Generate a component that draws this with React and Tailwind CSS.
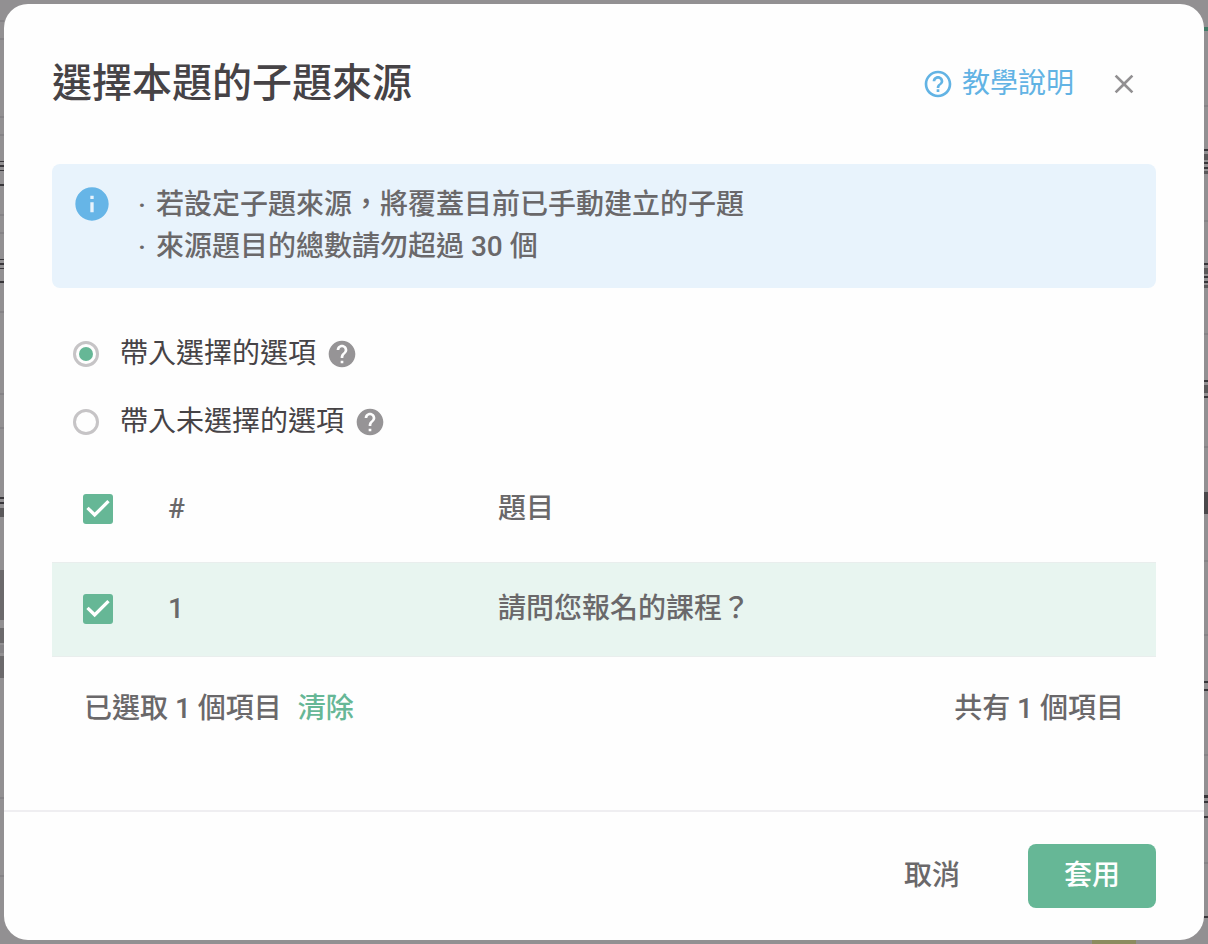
import { useState } from 'react';
import { MdClose, MdHelp, MdHelpOutline, MdInfo } from 'react-icons/md';

const NOTES = ['若設定子題來源，將覆蓋目前已手動建立的子題', '來源題目的總數請勿超過 30 個'];

const SOURCES = [
  { id: 'selected', label: '帶入選擇的選項' },
  { id: 'unselected', label: '帶入未選擇的選項' },
];

const QUESTIONS = [{ id: 1, title: '請問您報名的課程？' }];

// What is left visible of the dimmed page beside the dialog: [gap above, height, shade]
const LEFT_EDGE = [
  [20, 2, 'bg-[#858386]'],
  [16, 2, 'bg-[#858386]'],
  [76, 2, 'bg-[#858386]'],
  [16, 2, 'bg-[#858386]'],
  [25, 1, 'bg-[#38363a]'],
  [3, 2, 'bg-[#38363a]'],
  [3, 1, 'bg-[#38363a]'],
  [13, 2, 'bg-[#38363a]'],
  [28, 2, 'bg-[#858386]'],
  [16, 2, 'bg-[#858386]'],
  [25, 1, 'bg-[#38363a]'],
  [3, 2, 'bg-[#38363a]'],
  [3, 1, 'bg-[#38363a]'],
  [12, 2, 'bg-[#38363a]'],
  [28, 2, 'bg-[#858386]'],
  [80, 2, 'bg-[#858386]'],
  [32, 2, 'bg-[#858386]'],
  [68, 2, 'bg-[#38363a]'],
  [3, 2, 'bg-[#38363a]'],
  [4, 9, 'bg-[#5a585a]'],
  [53, 50, 'bg-[#6b696b]'],
  [8, 15, 'bg-[#6b696b]'],
  [2, 8, 'bg-[#858386]'],
  [3, 22, 'bg-[#6b696b]'],
  [119, 2, 'bg-[#858386]'],
  [76, 2, 'bg-[#858386]'],
];

const RIGHT_EDGE = [
  [27, 4, 'bg-[#427a66]'],
  [74, 2, 'bg-[#858386]'],
  [42, 2, 'bg-[#38363a]'],
  [3, 6, 'bg-[#5a585a]'],
  [2, 2, 'bg-[#38363a]'],
  [3, 2, 'bg-[#38363a]'],
  [2, 3, 'bg-[#5a585a]'],
  [46, 2, 'bg-[#858386]'],
  [41, 2, 'bg-[#38363a]'],
  [3, 6, 'bg-[#5a585a]'],
  [2, 2, 'bg-[#38363a]'],
  [3, 2, 'bg-[#38363a]'],
  [2, 3, 'bg-[#5a585a]'],
  [45, 2, 'bg-[#858386]'],
  [45, 2, 'bg-[#38363a]'],
  [3, 8, 'bg-[#5a585a]'],
  [3, 2, 'bg-[#38363a]'],
  [48, 2, 'bg-[#858386]'],
  [44, 22, 'bg-[#4a484b]'],
  [46, 2, 'bg-[#858386]'],
  [72, 2, 'bg-[#858386]'],
  [45, 2, 'bg-[#38363a]'],
  [6, 2, 'bg-[#38363a]'],
  [63, 2, 'bg-[#858386]'],
  [39, 3, 'bg-[#38363a]'],
  [3, 2, 'bg-[#38363a]'],
  [13, 2, 'bg-[#38363a]'],
  [44, 2, 'bg-[#858386]'],
  [52, 2, 'bg-[#38363a]'],
];

const PageEdge = ({ marks }) => (
  <div className="h-0 w-1">
    {marks.map(([gap, height, shade], i) => (
      <div key={i} className={shade} style={{ marginTop: gap, height }} />
    ))}
  </div>
);

const Checkbox = ({ label, checked, onChange }) => (
  <span className="grid size-[30px]">
    <input
      type="checkbox"
      aria-label={label}
      checked={checked}
      onChange={onChange}
      className="peer size-[30px] cursor-pointer appearance-none rounded-[3px] border-3 border-[#c2c0c2] [grid-area:1/1] checked:border-0 checked:bg-[#66b796]"
    />
    <svg
      viewBox="3 3 18 18"
      className="pointer-events-none hidden size-[30px] fill-white [grid-area:1/1] peer-checked:block"
    >
      <path d="M10 17l-5-5 1.41-1.41L10 14.17l7.59-7.59L19 8l-9 9z" />
    </svg>
  </span>
);

const App = () => {
  const [source, setSource] = useState('selected');
  const [picked, setPicked] = useState([1]);

  const allPicked = picked.length === QUESTIONS.length;

  const toggleAll = () => setPicked(allPicked ? [] : QUESTIONS.map((q) => q.id));
  const toggle = (id) =>
    setPicked(picked.includes(id) ? picked.filter((p) => p !== id) : [...picked, id]);

  return (
    <div className="grid min-h-screen bg-[#929092] font-['Roboto','Noto_Sans_CJK_TC',sans-serif] text-[28px] leading-[42px] font-medium text-[#6a686a]">
      <div aria-hidden="true" className="flex justify-between [grid-area:1/1]">
        <PageEdge marks={LEFT_EDGE} />
        <PageEdge marks={RIGHT_EDGE} />
      </div>
      <div aria-hidden="true" className="flex items-end justify-end pr-[72px] [grid-area:1/1]">
        <div className="h-2 w-11 bg-[#8c8c60]" />
      </div>

      <div
        role="dialog"
        aria-labelledby="dialog-title"
        className="z-10 m-1 flex flex-col rounded-3xl bg-[#fefefe] [grid-area:1/1]"
      >
        <header className="flex items-center justify-between px-12 py-12">
          <h1 id="dialog-title" className="text-[40px] leading-[64px] text-[#464346]">
            選擇本題的子題來源
          </h1>
          <div className="flex items-center gap-[18px]">
            <a href="#help" className="flex items-center gap-2 font-normal text-[#62b3e4]">
              <MdHelpOutline size={32} />
              教學說明
            </a>
            <button
              type="button"
              aria-label="關閉"
              className="flex size-16 cursor-pointer items-center justify-center text-[#929092]"
            >
              <MdClose size={32} />
            </button>
          </div>
        </header>

        <main className="flex-1 px-12 pb-12">
          <div className="flex items-start gap-4 rounded-lg bg-[#e8f3fc] px-5 py-5">
            <MdInfo size={40} className="shrink-0 text-[#66b5e7]" />
            <ul>
              {NOTES.map((note) => (
                <li key={note} className="flex">
                  <span className="w-7 shrink-0 text-center">‧</span>
                  {note}
                </li>
              ))}
            </ul>
          </div>

          <fieldset className="mt-8 px-[21px]">
            {SOURCES.map(({ id, label }) => (
              <div key={id} className="flex h-[68px] items-center">
                <input
                  type="radio"
                  id={id}
                  name="source"
                  checked={source === id}
                  onChange={() => setSource(id)}
                  className="grid size-[26px] cursor-pointer appearance-none place-content-center rounded-full border-3 border-[#c6c4c6] before:size-3.5 before:rounded-full checked:before:bg-[#66b796]"
                />
                <label htmlFor={id} className="cursor-pointer pl-[21px] font-normal text-[#464346]">
                  {label}
                </label>
                <MdHelp size={32} className="ml-[10px] text-[#969496]" />
              </div>
            ))}
          </fieldset>

          <table className="w-full table-fixed border-collapse text-left">
            <thead>
              <tr className="h-[106px]">
                <th className="w-[116px] pl-[31px]">
                  <Checkbox label="全選" checked={allPicked} onChange={toggleAll} />
                </th>
                <th className="w-[330px] font-medium">#</th>
                <th className="font-medium">題目</th>
              </tr>
            </thead>
            <tbody>
              {QUESTIONS.map(({ id, title }) => (
                <tr
                  key={id}
                  className={`h-[94px] border-y border-[#e9eeed] ${picked.includes(id) ? 'bg-[#e8f5f0]' : ''}`}
                >
                  <td className="pl-[31px]">
                    <Checkbox
                      label={title}
                      checked={picked.includes(id)}
                      onChange={() => toggle(id)}
                    />
                  </td>
                  <td>{id}</td>
                  <td>{title}</td>
                </tr>
              ))}
            </tbody>
          </table>

          <div className="flex h-[104px] items-center px-8">
            <span>已選取 {picked.length} 個項目</span>
            <button
              type="button"
              onClick={() => setPicked([])}
              className="ml-4 cursor-pointer text-[#66b796]"
            >
              清除
            </button>
            <span className="ml-auto">共有 {QUESTIONS.length} 個項目</span>
          </div>
        </main>

        <footer className="flex justify-end gap-8 border-t-2 border-[#efeef1] px-12 py-8">
          <button type="button" className="h-16 w-32 cursor-pointer rounded-lg">
            取消
          </button>
          <button type="button" className="h-16 w-32 cursor-pointer rounded-lg bg-[#66b796] text-white">
            套用
          </button>
        </footer>
      </div>
    </div>
  );
};

export default App;
